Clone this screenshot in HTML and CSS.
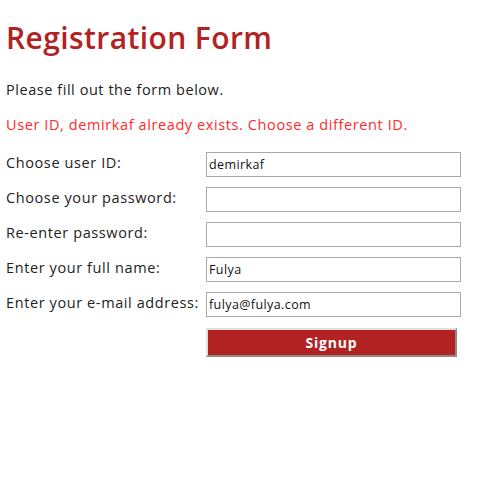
FILE: index.html
```html
<!DOCTYPE html>
<html>
<head>
<meta charset="utf-8">
<link rel="stylesheet" href="styles.css">
</head>
<body>
<div class="page">
  <h1 class="title">Registration Form</h1>
  <p class="intro">Please fill out the form below.</p>
  <p class="error">User ID, demirkaf already exists. Choose a different ID.</p>
  <form class="form">
    <label class="label" for="uid">Choose user ID:</label>
    <input class="field" id="uid" type="text" value="demirkaf">
    <label class="label" for="pw1">Choose your password:</label>
    <input class="field" id="pw1" type="password">
    <label class="label" for="pw2">Re-enter password:</label>
    <input class="field" id="pw2" type="password">
    <label class="label" for="name">Enter your full name:</label>
    <input class="field" id="name" type="text" value="Fulya">
    <label class="label" for="mail">Enter your e-mail address:</label>
    <input class="field" id="mail" type="text" value="fulya@fulya.com">
    <span class="spacer"></span>
    <button class="signup" type="button">Signup</button>
  </form>
</div>
</body>
</html>
```

FILE: styles.css
```css
html, body {
  margin: 0;
  padding: 0;
  background: #fff;
}
.page {
  padding: 0 0 0 6px;
  font-family: "Open Sans", "Lato", sans-serif;
  color: #222;
}
.title {
  margin: 0;
  padding-top: 19px;
  font-size: 30px;
  font-weight: 600;
  letter-spacing: 0.4px;
  line-height: 38px;
  color: #b22222;
}
.intro {
  margin: 23px 0 0;
  font-size: 14.5px;
  letter-spacing: 0.55px;
  line-height: 20px;
}
.error {
  margin: 15px 0 0;
  font-size: 14.5px;
  letter-spacing: 0.6px;
  line-height: 20px;
  color: #ff2b2b;
}
.form {
  margin-top: 17px;
  display: grid;
  grid-template-columns: 200px 255px;
  row-gap: 10px;
  align-items: center;
}
.label {
  font-size: 14.5px;
  letter-spacing: 0.6px;
  line-height: 20px;
  margin-top: -3px;
  white-space: nowrap;
}
.field {
  box-sizing: border-box;
  width: 255px;
  height: 25px;
  margin: 0;
  padding: 0 2px;
  border: 1px solid #a9a9a9;
  font-family: "Open Sans", sans-serif;
  font-size: 12.5px;
  letter-spacing: 0.4px;
  color: #111;
  background: #fff;
}
.signup {
  box-sizing: border-box;
  width: 251px;
  height: 29px;
  margin-top: 1px;
  border: 2px solid;
  border-color: #e0e0e0 #8a8a8a #8a8a8a #e0e0e0;
  background: #b22222;
  color: #fff;
  font-family: "Open Sans", sans-serif;
  font-weight: 700;
  font-size: 14px;
  letter-spacing: 0.8px;
}
```
